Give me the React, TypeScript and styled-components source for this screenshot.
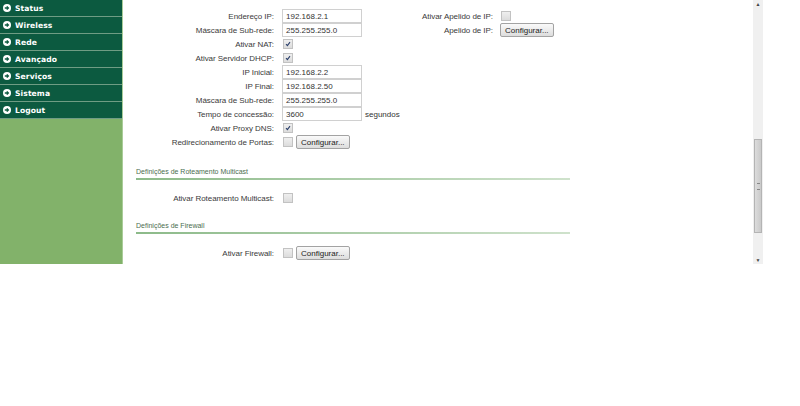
import React from "react"
import styled, { createGlobalStyle } from "styled-components"

const GlobalStyle = createGlobalStyle`
  html, body {
    margin: 0;
    padding: 0;
    background: #fff;
    font-family: "Liberation Sans", Arial, sans-serif;
  }
`

const Frame = styled.div`
  display: flex;
  width: 763px;
  height: 264px;
  overflow: hidden;
`

const Sidebar = styled.div`
  width: 123px;
  flex-shrink: 0;
  display: flex;
  flex-direction: column;
  background: #82b26a;
  border-right: 1px solid #a9cc98;
  box-sizing: border-box;
`

const MenuItem = styled.div`
  height: 17px;
  box-sizing: border-box;
  border-bottom: 1px solid #6f9c84;
  background: #0c5a40;
  display: flex;
  align-items: center;
  gap: 4px;
  padding-left: 3px;
  color: #fff;
  font-family: "DejaVu Sans", Verdana, sans-serif;
  font-weight: bold;
  font-size: 7.6px;
  letter-spacing: 0.1px;
`

const Content = styled.div`
  flex: 1;
  padding: 9px 0 0 13px;
  color: #333;
  font-size: 8px;
`

const TopForm = styled.div`
  display: flex;
`

const Column = styled.div<{ $width: number }>`
  width: ${({ $width }) => $width}px;
  display: flex;
  flex-direction: column;
`

const Row = styled.div<{ $label: number; $gap: number }>`
  display: grid;
  grid-template-columns: ${({ $label }) => $label}px auto;
  column-gap: ${({ $gap }) => $gap}px;
  align-items: center;
  height: 14px;
`

const Label = styled.span`
  text-align: right;
  white-space: nowrap;
  color: #3a3a3a;
  letter-spacing: -0.05px;
`

const Value = styled.div`
  display: flex;
  align-items: center;
  gap: 3px;
  white-space: nowrap;
`

const Input = styled.div`
  width: 75px;
  height: 12px;
  border: 1px solid #d0d0d0;
  padding-left: 3px;
  display: flex;
  align-items: center;
  background: #fff;
  color: #333;
`

const Box = styled.span`
  width: 8px;
  height: 8px;
  border: 1px solid #c2c2c2;
  background: linear-gradient(#efefef, #dcdcdc);
  display: inline-flex;
  align-items: center;
  justify-content: center;
  margin-left: 1px;
`

const Button = styled.div`
  height: 12px;
  padding: 0 4px;
  border: 1px solid #a3a3a3;
  border-radius: 2px;
  background: linear-gradient(#fafafa, #dddddd);
  display: flex;
  align-items: center;
  color: #222;
  font-size: 8px;
`

const Unit = styled.span`
  margin-left: 0;
`

const Section = styled.div<{ $top: number }>`
  margin-top: ${({ $top }) => $top}px;
  width: 434px;
`

const Heading = styled.div`
  font-size: 7px;
  color: #4b6d50;
  padding-bottom: 3px;
  border-bottom: 2px solid;
  border-image: linear-gradient(90deg, #8cba89, #cfe2cc) 1;
`

const SectionRow = styled.div<{ $top: number }>`
  margin-top: ${({ $top }) => $top}px;
`

const Scrollbar = styled.div`
  width: 10px;
  flex-shrink: 0;
  background: #f0f0f0;
  display: flex;
  flex-direction: column;
  align-items: center;
`

const Arrow = styled.div`
  height: 8px;
  font-size: 5px;
  line-height: 8px;
  color: #444;
`

const Track = styled.div`
  flex: 1;
  width: 100%;
  display: flex;
  flex-direction: column;
  padding-top: 131px;
  padding-bottom: 23px;
  box-sizing: border-box;
`

const Thumb = styled.div`
  flex: 1;
  margin: 0 1px;
  border: 1px solid #b4b4b4;
  background: linear-gradient(90deg, #dcdcdc, #cacaca);
  display: flex;
  align-items: center;
  justify-content: center;
`

const Grip = styled.div`
  width: 3px;
  height: 5px;
  border-top: 1px solid #888;
  border-bottom: 1px solid #888;
`

const ArrowIcon = () => (
  <svg width="8" height="8" viewBox="0 0 8 8">
    <circle cx="4" cy="4" r="4" fill="#fff" />
    <path d="M1.8 4h3.4M3.8 2.4 5.4 4 3.8 5.6" stroke="#0c5a40" strokeWidth="1.3" fill="none" />
  </svg>
)

const Check = () => (
  <svg width="6" height="6" viewBox="0 0 6 6">
    <path d="M1 3.2 2.4 4.6 5 1.2" stroke="#2b3f6b" strokeWidth="1.1" fill="none" />
  </svg>
)

const CheckBox = ({ checked }: { checked?: boolean }) => <Box>{checked && <Check />}</Box>

const menu = ["Status", "Wireless", "Rede", "Avançado", "Serviços", "Sistema", "Logout"]

const L = (props: { label: string; children: React.ReactNode }) => (
  <Row $label={138} $gap={8}>
    <Label>{props.label}</Label>
    <Value>{props.children}</Value>
  </Row>
)

const R = (props: { label: string; children: React.ReactNode }) => (
  <Row $label={93} $gap={7}>
    <Label>{props.label}</Label>
    <Value>{props.children}</Value>
  </Row>
)

const App = () => (
  <>
    <GlobalStyle />
    <Frame>
      <Sidebar>
        {menu.map((m) => (
          <MenuItem key={m}>
            <ArrowIcon />
            {m}
          </MenuItem>
        ))}
      </Sidebar>
      <Content>
        <TopForm>
          <Column $width={264}>
            <L label="Endereço IP:"><Input>192.168.2.1</Input></L>
            <L label="Máscara de Sub-rede:"><Input>255.255.255.0</Input></L>
            <L label="Ativar NAT:"><CheckBox checked /></L>
            <L label="Ativar Servidor DHCP:"><CheckBox checked /></L>
            <L label="IP Inicial:"><Input>192.168.2.2</Input></L>
            <L label="IP Final:"><Input>192.168.2.50</Input></L>
            <L label="Máscara de Sub-rede:"><Input>255.255.255.0</Input></L>
            <L label="Tempo de concessão:">
              <Input>3600</Input>
              <Unit>segundos</Unit>
            </L>
            <L label="Ativar Proxy DNS:"><CheckBox checked /></L>
            <L label="Redirecionamento de Portas:">
              <CheckBox />
              <Button>Configurar...</Button>
            </L>
          </Column>
          <Column $width={200}>
            <R label="Ativar Apelido de IP:"><CheckBox /></R>
            <R label="Apelido de IP:"><Button>Configurar...</Button></R>
          </Column>
        </TopForm>
        <Section $top={19}>
          <Heading>Definições de Roteamento Multicast</Heading>
          <SectionRow $top={11}>
            <L label="Ativar Roteamento Multicast:"><CheckBox /></L>
          </SectionRow>
        </Section>
        <Section $top={17}>
          <Heading>Definições de Firewall</Heading>
          <SectionRow $top={12}>
            <L label="Ativar Firewall:">
              <CheckBox />
              <Button>Configurar...</Button>
            </L>
          </SectionRow>
        </Section>
      </Content>
      <Scrollbar>
        <Arrow>▲</Arrow>
        <Track>
          <Thumb>
            <Grip />
          </Thumb>
        </Track>
        <Arrow>▼</Arrow>
      </Scrollbar>
    </Frame>
  </>
)

export default App
